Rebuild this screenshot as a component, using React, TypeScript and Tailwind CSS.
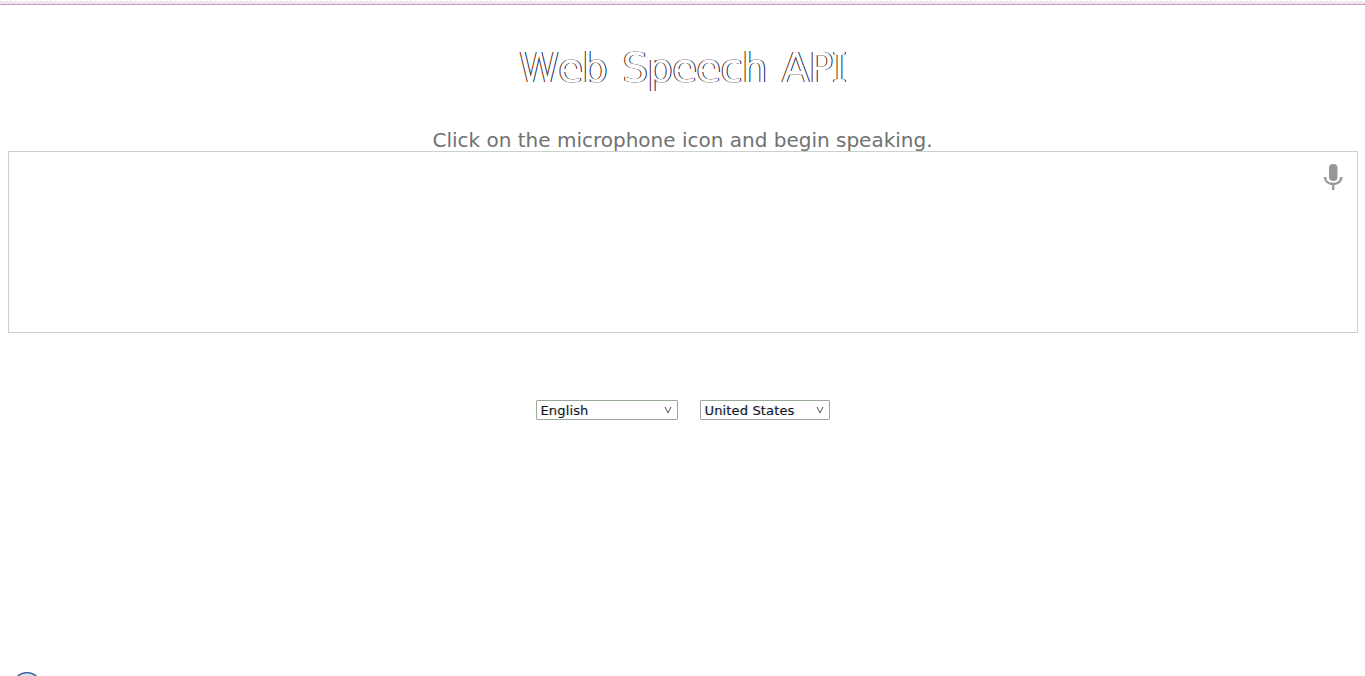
import React from "react";

function Picker({ label, className }: { label: string; className: string }) {
  return (
    <button type="button" className={`flex h-5 items-center justify-between rounded-[1px] border border-[#9aac98] bg-white pl-1 pr-[5px] text-[#101018] ${className}`}>
      <span className="whitespace-nowrap pt-0.5 text-[13px] leading-4 tracking-[0.15px] [text-shadow:-1px_0_#f0b07040,1px_0_#50b0ff50]">{label}</span>
      <svg width="8" height="8" viewBox="0 0 8 8" fill="none" stroke="#554a58" strokeWidth="1">
        <path d="M1 1L4 6.8L7 1" />
      </svg>
    </button>
  );
}

export default function App() {
  return (
    <div className="flex h-[676px] w-full flex-col overflow-hidden bg-white font-['DejaVu_Sans',sans-serif]">
      <div className="flex h-[5px] shrink-0 flex-col border-b border-[#c9a0c9]">
        <div className="h-px" />
        <div className="h-px bg-[repeating-linear-gradient(90deg,#c3d0c3_0_1px,#ffffff_1px_2px,#e3c8e3_2px_3px,#ffffff_3px_5px)]" />
        <div className="h-px bg-[#fae8fa]" />
        <div className="h-px bg-[repeating-linear-gradient(90deg,#fbe0fb_0_3px,#d3dcd3_3px_5px)]" />
      </div>
      <h1 className="mt-[38px] h-[50px] shrink-0 text-center text-[40px] leading-[50px] tracking-[-0.5px] text-white [font-kerning:none] [text-shadow:-1px_0_#5c2000,1px_0_#001c58] [word-spacing:3px]">
        Web Speech AP<span className="font-['Noto_Sans',sans-serif] text-[41px] leading-none">I</span>
      </h1>
      <p className="mt-[35px] h-6 shrink-0 text-center text-[20px] leading-6 text-[#6f7270]">Click on the microphone icon and begin speaking.</p>
      <div className="-mt-px ml-2 mr-[7px] flex h-[182px] shrink-0 justify-end border border-x-[#d8c8dc] border-y-[#c8d2c8] pr-[14px] pt-3">
        <svg width="20" height="26" viewBox="0 0 20 26" fill="none">
          <rect x="6" y="0" width="8.5" height="17" rx="4" fill="#979797" />
          <path d="M2 13C2 17.5 5.5 20 10.2 20S18.4 17.5 18.4 13M10.2 20V26" stroke="#979797" strokeWidth="2.4" />
        </svg>
      </div>
      <div className="mt-[67px] flex shrink-0 justify-center gap-[22px]">
        <Picker label="English" className="w-[142px]" />
        <Picker label="United States" className="w-[130px]" />
      </div>
      <div className="mt-auto flex h-[4px] shrink-0 overflow-hidden pl-3">
        <svg width="30" height="30" viewBox="0 0 30 30" className="shrink-0">
          <circle cx="15" cy="15" r="14.3" fill="#d8e0e8" stroke="#2a5a98" strokeWidth="1.3" />
        </svg>
      </div>
    </div>
  );
}
